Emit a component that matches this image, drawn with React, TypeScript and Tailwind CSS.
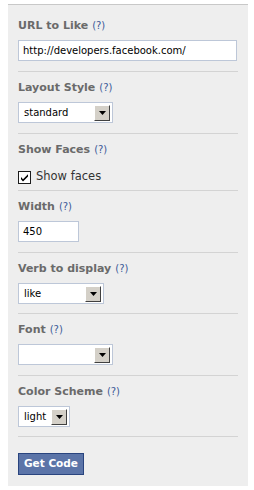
import React from 'react';

const Help: React.FC = () => (
  <span className="ml-[4px] text-[10px] font-normal text-[#3b5998]">(?)</span>
);

const Label: React.FC<{ text: string }> = ({ text }) => (
  <div className="flex h-[16px] items-center text-[11px] font-bold leading-[16px] text-[#6a6a6a]">
    {text}
    <Help />
  </div>
);

const Arrow: React.FC = () => (
  <div className="flex h-[16px] w-[16px] items-center justify-center border border-t-white border-l-white border-r-[#404040] border-b-[#404040] bg-[#d4d0c8]">
    <svg width="7" height="4" viewBox="0 0 7 4">
      <path d="M0 0h7L3.5 4z" fill="#000" />
    </svg>
  </div>
);

const Select: React.FC<{ value: string; width: string }> = ({ value, width }) => (
  <div className={`flex h-[21px] items-center justify-between border border-[#bdc7d8] bg-white pl-[5px] pr-[2px] ${width}`}>
    <span className="text-[10px] text-black">{value}</span>
    <Arrow />
  </div>
);

const TextBox: React.FC<{ value: string; width: string }> = ({ value, width }) => (
  <div className={`flex h-[21px] items-center border border-[#bdc7d8] bg-white pl-[4px] text-[10px] text-black ${width}`}>
    {value}
  </div>
);

export default function App() {
  return (
    <div className="min-h-screen bg-white pl-[8px] pt-[4px]" style={{ fontFamily: '"DejaVu Sans", Verdana, sans-serif' }}>
      <div className="w-[240px] border-t border-[#c8c8c8] bg-[#eeeeee] px-[10px] pb-[11px]">
        <div className="border-b border-[#d3d3d3] pb-[10px] pt-[13px]">
          <Label text="URL to Like" />
          <div className="mt-[6px]">
            <TextBox value="http://developers.facebook.com/" width="w-[219px]" />
          </div>
        </div>

        <div className="border-b border-[#d3d3d3] pb-[10px] pt-[8px]">
          <Label text="Layout Style" />
          <div className="mt-[6px]">
            <Select value="standard" width="w-[95px]" />
          </div>
        </div>

        <div className="border-b border-[#d3d3d3] pb-[5px] pt-[8px]">
          <Label text="Show Faces" />
          <div className="mt-[11px] flex h-[16px] items-center">
            <div className="flex h-[13px] w-[13px] items-center justify-center border border-[#1c1c1c] bg-white">
              <svg width="9" height="9" viewBox="0 0 9 9">
                <path d="M1 4l2 2.2L8 1.2v2.2L3 8.4 1 6.2z" fill="#000" />
              </svg>
            </div>
            <span className="ml-[5px] text-[11.5px] text-[#333]">Show faces</span>
          </div>
        </div>

        <div className="border-b border-[#d3d3d3] pb-[10px] pt-[8px]">
          <Label text="Width" />
          <div className="mt-[6px]">
            <TextBox value="450" width="w-[61px]" />
          </div>
        </div>

        <div className="border-b border-[#d3d3d3] pb-[9px] pt-[8px]">
          <Label text="Verb to display" />
          <div className="mt-[6px]">
            <Select value="like" width="w-[86px]" />
          </div>
        </div>

        <div className="border-b border-[#d3d3d3] pb-[10px] pt-[8px]">
          <Label text="Font" />
          <div className="mt-[6px]">
            <Select value="" width="w-[95px]" />
          </div>
        </div>

        <div className="border-b border-[#d3d3d3] pb-[9px] pt-[8px]">
          <Label text="Color Scheme" />
          <div className="mt-[6px]">
            <Select value="light" width="w-[52px]" />
          </div>
        </div>

        <div className="pt-[13px]">
          <button className="h-[22px] w-[66px] border border-[#29447e] bg-[#5b74a8] text-[10.5px] font-bold text-white">
            Get Code
          </button>
        </div>
      </div>
    </div>
  );
}
